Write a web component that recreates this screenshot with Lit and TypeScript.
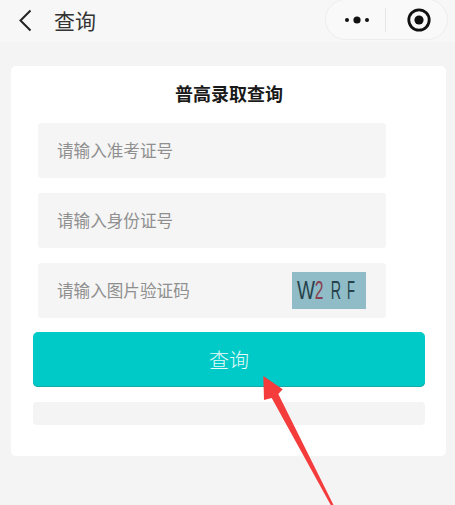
import { LitElement, html, css } from "lit";
import { customElement } from "lit/decorators.js";

@customElement("app-root")
export class AppRoot extends LitElement {
  static styles = css`
    :host {
      display: block;
      position: relative;
      width: 455px;
      height: 505px;
      overflow: hidden;
      background: #f4f4f4;
      font-family: "Noto Sans CJK SC", "Liberation Sans", sans-serif;
    }
    .nav {
      height: 42px;
      padding: 0 7px 0 18px;
      display: flex;
      align-items: flex-start;
      background: #f7f7f7;
      box-sizing: border-box;
    }
    .back { margin-top: 9px; width: 14px; height: 23px; flex: none; }
    .nav-title {
      margin: 2px 0 0 22px;
      font-size: 21px;
      line-height: 36px;
      color: #333;
      flex: 1;
    }
    .capsule {
      width: 123px;
      height: 41px;
      box-sizing: border-box;
      border: 1px solid #ededed;
      border-radius: 21px;
      margin-top: -1px;
      background: #f9f9f9;
      display: flex;
      align-items: center;
    }
    .cap-side { flex: 1; display: flex; justify-content: center; align-items: center; box-sizing: border-box; }
    .cap-left { padding-left: 2px; }
    .cap-right { padding-left: 4px; }
    .cap-div { width: 1px; height: 24px; background: #e6e6e6; flex: none; }
    .card {
      margin: 24px 9px 0 11px;
      height: 390px;
      box-sizing: border-box;
      background: #fff;
      border-radius: 5px;
      padding: 13px 21px 0 22px;
      display: flex;
      flex-direction: column;
    }
    .title {
      text-align: center;
      font-size: 18px;
      line-height: 28px;
      font-weight: 700;
      color: #1a1a1a;
      margin-bottom: 16px;
    }
    .fields {
      display: flex;
      flex-direction: column;
      gap: 15px;
      width: 348px;
      margin-left: 5px;
    }
    .field {
      height: 55px;
      background: #f5f5f5;
      border-radius: 3px;
      display: flex;
      align-items: center;
      justify-content: space-between;
      padding: 0 20px 0 19px;
      font-size: 16.6px;
      color: #8f8f8f;
    }
    .ph { margin-top: -2px; }
    .captcha {
      width: 74px;
      height: 37px;
      box-sizing: border-box;
      padding-left: 5px;
      background: #8fbcc6;
      display: flex;
      align-items: center;
      font-family: "Liberation Sans", sans-serif;
      font-size: 26px;
      color: #25424c;
      flex: none;
    }
    .ch { display: flex; justify-content: center; flex: none; }
    .w { width: 18px; transform: scaleX(0.73); }
    .two { width: 8px; transform: scaleX(0.6); color: #8a3f52; margin-right: 8px; }
    .r { width: 10px; transform: scaleX(0.55); margin-right: 6px; }
    .f { width: 8px; transform: scaleX(0.5); }
    .button {
      margin-top: 14px;
      height: 55px;
      border-radius: 5px;
      background: #00cac7;
      box-shadow: inset 0 -1px 0 #14aaa8;
      color: #e6faf9;
      font-size: 20px;
      font-weight: 300;
      display: flex;
      align-items: center;
      justify-content: center;
      width: 392px;
    }
    .bar {
      margin-top: 15px;
      height: 23px;
      width: 392px;
      border-radius: 4px;
      background: #f4f4f4;
    }
    .arrow {
      position: absolute;
      left: 0;
      top: 0;
      width: 455px;
      height: 505px;
      pointer-events: none;
    }
  `;

  render() {
    return html`
      <div class="nav">
        <svg class="back" viewBox="0 0 14 23">
          <path d="M12.5 1.5 L2.5 11.5 L12.5 21.5" fill="none" stroke="#222" stroke-width="2" />
        </svg>
        <div class="nav-title">查询</div>
        <div class="capsule">
          <div class="cap-side cap-left">
            <svg width="26" height="10" viewBox="0 0 26 10">
              <circle cx="3" cy="5" r="2" fill="#111" />
              <circle cx="13" cy="5" r="3.6" fill="#111" />
              <circle cx="23" cy="5" r="2" fill="#111" />
            </svg>
          </div>
          <div class="cap-div"></div>
          <div class="cap-side cap-right">
            <svg width="26" height="26" viewBox="0 0 26 26">
              <circle cx="13" cy="13" r="10.2" fill="none" stroke="#111" stroke-width="2.8" />
              <circle cx="13" cy="13" r="4.6" fill="#111" />
            </svg>
          </div>
        </div>
      </div>
      <div class="card">
        <div class="title">普高录取查询</div>
        <div class="fields">
          <div class="field"><span class="ph">请输入准考证号</span></div>
          <div class="field"><span class="ph">请输入身份证号</span></div>
          <div class="field">
            <span class="ph">请输入图片验证码</span>
            <div class="captcha"><span class="ch w">W</span><span class="ch two">2</span><span class="ch r">R</span><span class="ch f">F</span></div>
          </div>
        </div>
        <div class="button">查询</div>
        <div class="bar"></div>
      </div>
      <svg class="arrow" viewBox="0 0 455 505">
        <path d="M263.3 376 L282.7 389.3 L278.3 394 L333.5 505 L330.7 505 L271.7 398 L264 400 Z" fill="#f43c3c" />
      </svg>
    `;
  }
}
